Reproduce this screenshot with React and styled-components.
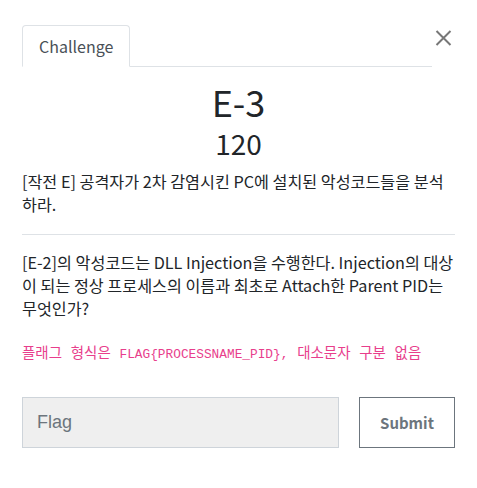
import React from "react";
import styled, { createGlobalStyle } from "styled-components";

const Global = createGlobalStyle`
  html, body { margin: 0; padding: 0; background: #fff; }
  body { font-family: "Noto Sans CJK KR", "Noto Sans", sans-serif; color: #212529; }
`;

const Page = styled.div`
  padding: 25px 22px 0 22px;
`;

const Header = styled.div`
  display: flex;
  align-items: flex-start;
`;

const Nav = styled.div`
  flex: 1;
  display: flex;
  border-bottom: 1px solid #dee2e6;
`;

const Tab = styled.div`
  border: 1px solid #dee2e6;
  border-bottom-color: #fff;
  border-radius: 4px 4px 0 0;
  margin-bottom: -1px;
  padding: 8px 16px;
  line-height: 24px;
  font-size: 16px;
  color: #495057;
`;

const Close = styled.button`
  width: 23px;
  height: 26px;
  padding: 5px 0 0 3px;
  margin: 0;
  border: 0;
  background: none;
  display: flex;
  align-items: flex-start;
  cursor: pointer;
`;

const Title = styled.h2`
  margin: 14px 0 0 0;
  text-align: center;
  font-size: 36px;
  font-weight: 400;
  line-height: 40px;
`;

const Points = styled.h4`
  margin: 5px 0 0 0;
  text-align: center;
  font-size: 28px;
  font-weight: 400;
  line-height: 34px;
`;

const Para = styled.p`
  margin: ${(p) => p.$mt || 0}px 0 0 0;
  font-size: 16.2px;
  line-height: 23px;
`;

const Rule = styled.hr`
  margin: 18px 0 0 0;
  border: 0;
  border-top: 1px solid #dee2e6;
`;

const Hint = styled.p`
  margin: 24px 0 0 0;
  font-family: "Liberation Mono", "Noto Sans CJK KR", monospace;
  font-size: 14.5px;
  line-height: 20px;
  color: #e83e8c;
`;

const Mono = styled.span`
  font-size: 12.8px;
`;

const Form = styled.div`
  display: flex;
  gap: 20px;
  margin-top: 32px;
`;

const Input = styled.input`
  flex: 1;
  min-width: 0;
  height: 51px;
  box-sizing: border-box;
  border: 1px solid #ced4da;
  background: #efefef;
  padding: 0 14px;
  font-family: "Liberation Sans", Arial, sans-serif;
  font-size: 18px;
  color: #495057;
  &::placeholder { color: #6c757d; }
`;

const Submit = styled.button`
  width: 96px;
  height: 51px;
  box-sizing: border-box;
  border: 1px solid #6c757d;
  background: #fff;
  color: #6c757d;
  font-family: "Noto Sans CJK KR", sans-serif;
  font-weight: 700;
  font-size: 15px;
`;

export default function App() {
  return (
    <>
      <Global />
      <Page>
        <Header>
          <Nav>
            <Tab>Challenge</Tab>
          </Nav>
          <Close aria-label="Close">
            <svg width="17" height="16" viewBox="0 0 17 16">
              <path d="M1.5 1 L15.5 15 M15.5 1 L1.5 15" stroke="#777" strokeWidth="2" fill="none" />
            </svg>
          </Close>
        </Header>
        <Title>E-3</Title>
        <Points>120</Points>
        <Para $mt={10}>[작전 E] 공격자가 2차 감염시킨 PC에 설치된 악성코드들을 분석하라.</Para>
        <Rule />
        <Para $mt={16}>
          [E-2]의 악성코드는 DLL Injection을 수행한다. Injection의 대상이 되는 정상 프로세스의 이름과 최초로 Attach한 Parent PID는 무엇인가?
        </Para>
        <Hint>플래그 형식은 <Mono>FLAG{"{"}PROCESSNAME_PID{"}"},</Mono> 대소문자 구분 없음</Hint>
        <Form>
          <Input placeholder="Flag" />
          <Submit>Submit</Submit>
        </Form>
      </Page>
    </>
  );
}
